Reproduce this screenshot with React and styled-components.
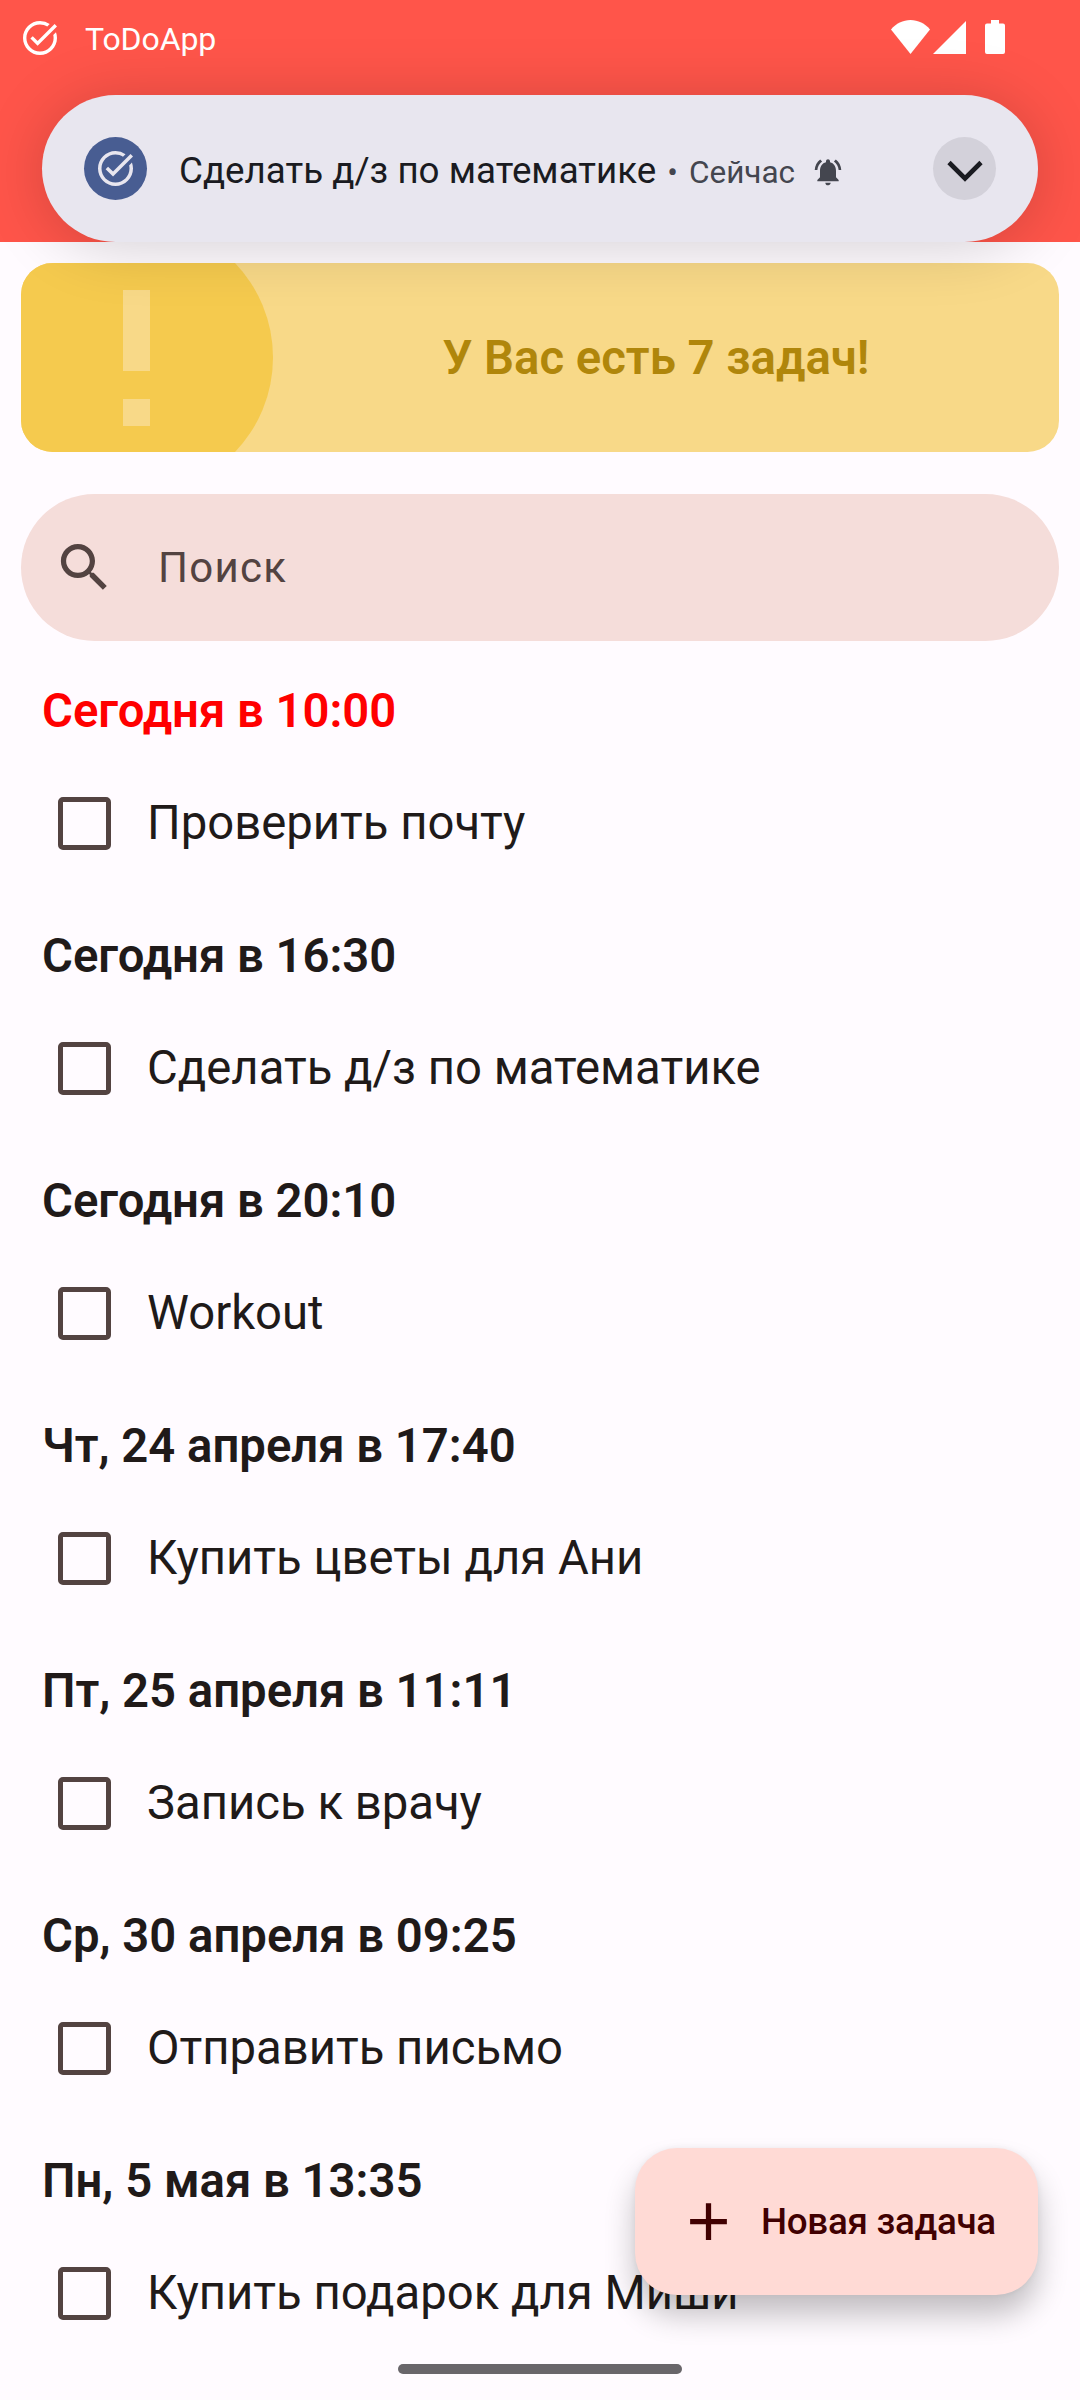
import React from "react";
import styled, { createGlobalStyle } from "styled-components";

const Global = createGlobalStyle`
  * { box-sizing: border-box; }
  html, body { margin: 0; padding: 0; background: #fffbff; }
  body { font-family: Roboto, "Noto Sans", sans-serif; color: #201a19; }
  h1, h2, p { margin: 0; font-weight: 400; }
  svg { display: block; }
`;

const Screen = styled.div`
  position: relative;
  width: 1080px;
  height: 2400px;
  overflow: hidden;
  background: #fffbff;
  display: flex;
  flex-direction: column;
`;

const Header = styled.header`
  flex: none;
  height: 242px;
  background: #ff554a;
  padding: 0 42px;
`;

const StatusBar = styled.div`
  height: 95px;
  margin: 0 -42px;
  padding: 20px 75px 0 23px;
  display: flex;
  align-items: flex-start;
  color: #fff;
`;

const AppName = styled.span`
  margin-left: 28px;
  font-size: 32px;
  line-height: 38px;
  letter-spacing: -0.1px;
`;

const AppGlyph = styled.span`
  padding-top: 1px;
`;

const StatusIcons = styled.div`
  margin-left: auto;
  display: flex;
  align-items: flex-start;
`;

const WifiIcon = styled.svg`
  margin-right: 3px;
`;

const SignalIcon = styled.svg`
  margin-right: 19px;
`;

const Notification = styled.section`
  position: relative;
  z-index: 2;
  height: 147px;
  border-radius: 73.5px;
  background: #e8e6ef;
  padding: 0 42px;
  display: flex;
  align-items: center;
  box-shadow: 0 4px 62px rgba(0, 0, 0, 0.18);
`;

const Badge = styled.div`
  flex: none;
  width: 63px;
  height: 63px;
  border-radius: 50%;
  padding-top: ${(p) => p.$drop || 0}px;
  display: flex;
  align-items: center;
  justify-content: center;
  background: ${(p) => p.$bg};
  color: ${(p) => p.$fg};
`;

const NotificationText = styled.div`
  flex: 1;
  margin-left: 32px;
  padding-top: 7px;
  display: flex;
  align-items: baseline;
  white-space: nowrap;
  color: #44464f;
  font-size: 31.5px;
  line-height: 44px;
`;

const NotificationTitle = styled.h2`
  font-size: 36.75px;
  color: #1a1b21;
`;

const Dot = styled.span`
  margin: 0 11px;
`;

const BellIcon = styled.svg`
  margin-left: 17px;
  align-self: center;
`;

const Content = styled.main`
  flex: 1;
  padding: 21px 21px 0;
`;

const Banner = styled.section`
  position: relative;
  height: 189px;
  border-radius: 31.5px;
  overflow: hidden;
  background: #f8d988;
  padding-right: 20px;
  display: flex;
  align-items: center;
`;

const BannerDisc = styled.div`
  flex: none;
  width: 273px;
  height: 273px;
  margin-left: -21px;
  border-radius: 50%;
  background: #f5ca4e;
  display: flex;
  flex-direction: column;
  align-items: center;
  justify-content: center;
  gap: 28px;
`;

const Mark = styled.div`
  width: 27px;
  height: ${(p) => p.$h}px;
  background: #f8d988;
`;

const BannerText = styled.p`
  flex: 1;
  text-align: center;
  font-size: 47.25px;
  line-height: 56px;
  font-weight: 600;
  color: #b0860b;
`;

const Search = styled.label`
  margin-top: 42px;
  height: 147px;
  border-radius: 73.5px;
  background: #f5ddda;
  color: #534341;
  padding: 0 31.5px;
  display: flex;
  align-items: center;
  gap: 42.5px;
  font-size: 42px;
  letter-spacing: 1.3px;
`;

const TaskList = styled.ul`
  list-style: none;
  margin: 0;
  padding: 42px 21px 0;
`;

const TaskItem = styled.li`
  height: 245px;
`;

const TaskTime = styled.h2`
  font-size: 47.25px;
  line-height: 56px;
  font-weight: 600;
  color: ${(p) => (p.$overdue ? "#ff0000" : "#201a19")};
`;

const TaskRow = styled.div`
  margin-top: 58px;
  padding-left: 16px;
  display: flex;
  align-items: center;
  gap: 36px;
  white-space: nowrap;
`;

const TaskTitle = styled.span`
  padding-bottom: 1px;
  font-size: 47.25px;
  line-height: 52px;
`;

const Checkbox = styled.span`
  width: 53px;
  height: 53px;
  border: 5px solid #534341;
  border-radius: 5px;
`;

const Fab = styled.button`
  position: absolute;
  right: 42px;
  bottom: 105px;
  width: 403px;
  height: 147px;
  border: 0;
  border-radius: 42px;
  padding: 0 0 0 42px;
  display: flex;
  align-items: center;
  gap: 21px;
  background: #ffdad5;
  color: #410001;
  font: 500 36.75px/44px Roboto, "Noto Sans", sans-serif;
  letter-spacing: -0.28px;
  white-space: nowrap;
  box-shadow: 0 20px 30px rgba(0, 0, 0, 0.24), 0 0 6px rgba(0, 0, 0, 0.06);
`;

const HomeHandle = styled.div`
  position: absolute;
  left: 398px;
  bottom: 26px;
  width: 284px;
  height: 10px;
  border-radius: 5px;
  background: #69666a;
`;

const tasks = [
  { time: "Сегодня в 10:00", title: "Проверить почту", overdue: true },
  { time: "Сегодня в 16:30", title: "Сделать д/з по математике" },
  { time: "Сегодня в 20:10", title: "Workout" },
  { time: "Чт, 24 апреля в 17:40", title: "Купить цветы для Ани" },
  { time: "Пт, 25 апреля в 11:11", title: "Запись к врачу" },
  { time: "Ср, 30 апреля в 09:25", title: "Отправить письмо" },
  { time: "Пн, 5 мая в 13:35", title: "Купить подарок для Миши" },
];

function TaskAltIcon({ size }) {
  return (
    <svg width={size} height={size} viewBox="2 2 20 20" fill="currentColor">
      <path d="M22 5.180 10.590 16.600l-4.240-4.240 1.410-1.410 2.830 2.830 10-10L22 5.180zm-2.210 5.040c.130.570.210 1.170.210 1.780 0 4.420-3.580 8-8 8s-8-3.580-8-8 3.580-8 8-8c1.580 0 3.040.460 4.280 1.250l1.440-1.440A9.900 9.900 0 0 0 12 2C6.480 2 2 6.480 2 12s4.480 10 10 10 10-4.480 10-10c0-1.190-.220-2.330-.600-3.390l-1.610 1.610z" />
    </svg>
  );
}

export default function App() {
  return (
    <Screen>
      <Global />
      <Header>
        <StatusBar>
          <AppGlyph>
            <TaskAltIcon size={34} />
          </AppGlyph>
          <AppName>ToDoApp</AppName>
          <StatusIcons>
            <WifiIcon width="39" height="34" viewBox="0 0 39 34" fill="#fff">
              <path d="M19.5 34 0 9.5C5 3.5 12 0 19.500 0S34 3.500 39 9.500Z" />
            </WifiIcon>
            <SignalIcon width="33" height="34" viewBox="0 0 33 34" fill="#fff">
              <path d="M33 1v33H0Z" />
            </SignalIcon>
            <svg width="20" height="35" viewBox="0 0 20 35" fill="#fff">
              <path d="M6 0h8v3.500h4a2 2 0 0 1 2 2V32a2 2 0 0 1-2 2H2a2 2 0 0 1-2-2V5.500a2 2 0 0 1 2-2h4Z" />
            </svg>
          </StatusIcons>
        </StatusBar>
        <Notification>
          <Badge $bg="#485d92" $fg="#e8e6ef">
            <TaskAltIcon size={35} />
          </Badge>
          <NotificationText>
            <NotificationTitle>Сделать д/з по математике</NotificationTitle>
            <Dot>•</Dot>
            <span>Сейчас</span>
            <BellIcon width="32" height="32" viewBox="0 0 24 24" fill="#44464f">
              <path d="M7.580 4.080 6.150 2.650C3.750 4.480 2.170 7.300 2.030 10.500h2c.150-2.650 1.510-4.970 3.550-6.420zm12.390 6.420h2c-.150-3.200-1.730-6.020-4.120-7.850l-1.420 1.430c2.020 1.450 3.390 3.770 3.540 6.420zM18 11c0-3.070-1.640-5.640-4.500-6.320V4c0-.830-.670-1.500-1.500-1.500s-1.500.670-1.500 1.500v.680C7.630 5.360 6 7.920 6 11v5l-2 2v1h16v-1l-2-2v-5zm-6 11c.140 0 .270-.010.400-.040.650-.140 1.180-.580 1.440-1.180.100-.240.150-.500.150-.780h-4c.010 1.100.900 2 2.010 2z" />
            </BellIcon>
          </NotificationText>
          <Badge $bg="#d3d1da" $fg="#1a1b21" $drop={4}>
            <svg width="36" height="22" viewBox="0 0 36 22" fill="none" stroke="currentColor" strokeWidth="4.600">
              <path d="M2 2.500 18 18.500 34 2.500" />
            </svg>
          </Badge>
        </Notification>
      </Header>
      <Content>
        <Banner>
          <BannerDisc>
            <Mark $h={81} />
            <Mark $h={27} />
          </BannerDisc>
          <BannerText>У Вас есть 7 задач!</BannerText>
        </Banner>
        <Search>
          <svg width="63" height="63" viewBox="0 0 24 24" fill="currentColor">
            <path d="M15.500 14h-.790l-.280-.270C15.410 12.590 16 11.110 16 9.500 16 5.910 13.090 3 9.500 3S3 5.910 3 9.500 5.910 16 9.500 16c1.610 0 3.090-.590 4.230-1.570l.270.280v.790l5 4.990L20.490 19l-4.990-5zm-6 0C7.010 14 5 11.990 5 9.500S7.010 5 9.500 5 14 7.010 14 9.500 11.990 14 9.500 14z" />
          </svg>
          <span>Поиск</span>
        </Search>
        <TaskList>
          {tasks.map((t) => (
            <TaskItem key={t.time}>
              <TaskTime $overdue={t.overdue}>{t.time}</TaskTime>
              <TaskRow>
                <Checkbox />
                <TaskTitle>{t.title}</TaskTitle>
              </TaskRow>
            </TaskItem>
          ))}
        </TaskList>
      </Content>
      <Fab>
        <svg width="63" height="63" viewBox="0 0 24 24" fill="currentColor">
          <path d="M19 13h-6v6h-2v-6H5v-2h6V5h2v6h6z" />
        </svg>
        <span>Новая задача</span>
      </Fab>
      <HomeHandle />
    </Screen>
  );
}
